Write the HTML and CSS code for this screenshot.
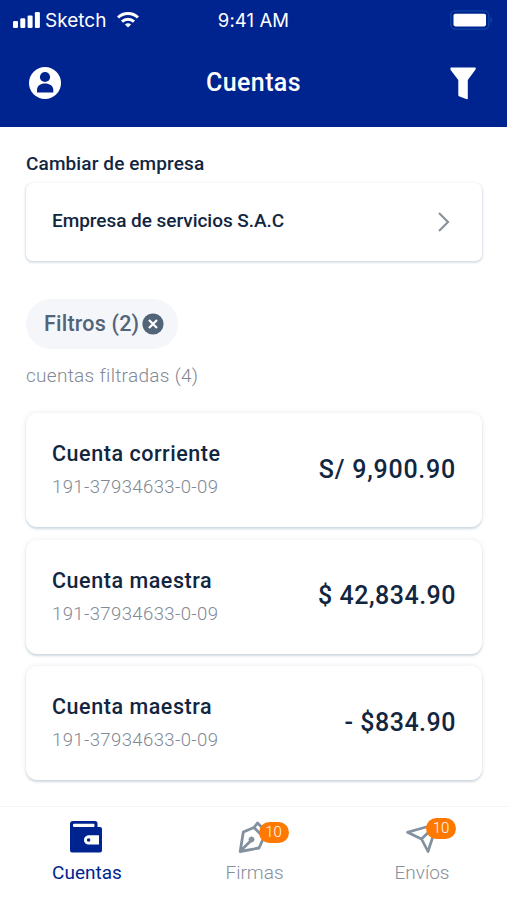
FILE: index.html
```html
<!DOCTYPE html>
<html lang="es">
<head>
<meta charset="utf-8">
<meta name="viewport" content="width=device-width, initial-scale=1">
<title>Cuentas</title>
<link rel="stylesheet" href="styles.css">
</head>
<body>
<div class="app">
  <header class="header">
    <div class="status">
      <div class="carrier">
        <svg width="27" height="16" viewBox="0 0 27 16" fill="#fff"><rect x="0" y="9" width="5" height="7" rx="1.2"/><rect x="7.3" y="6.3" width="5" height="9.7" rx="1.2"/><rect x="14.6" y="3.4" width="5" height="12.6" rx="1.2"/><rect x="21.9" y="0" width="5" height="16" rx="1.2"/></svg>
        <span class="carrier-name">Sketch</span>
        <svg class="wifi" width="22" height="16" viewBox="0 0 22 16" fill="none" stroke="#fff" stroke-width="3"><path d="M1 5.5C6.500.200 15.500.200 21 5.500"/><path d="M5 9.700C8.400 6.500 13.600 6.500 17 9.700"/><path d="M11 15.600L7.900 12.400C9.600 10.900 12.400 10.900 14.100 12.400Z" fill="#fff" stroke="none"/></svg>
      </div>
      <span class="clock">9:41 AM</span>
      <svg class="battery" width="43" height="20" viewBox="0 0 43 20"><rect x=".8" y=".8" width="38" height="18.400" rx="4.500" fill="none" stroke="#0d45a3" stroke-width="1.300"/><rect x="3.500" y="3.800" width="32.500" height="12.600" rx="1.800" fill="#fff"/><path d="M40.500 7v6c2.300-1 2.300-5 0-6z" fill="#0d45a3"/></svg>
    </div>
    <div class="titlebar">
      <svg width="32" height="32" viewBox="0 0 32 32"><circle cx="16" cy="16" r="16" fill="#fff"/><circle cx="16" cy="10" r="5.100" fill="#00248f"/><path d="M8 25.500V23C8 19 11.400 16.600 16 16.600S24.300 19 24.300 23v2.500z" fill="#00248f"/></svg>
      <h1 class="title">Cuentas</h1>
      <svg class="funnel" width="26" height="33" viewBox="0 0 26 33" fill="#fff"><path d="M1 .5h24q1 0 .8 1.200L25 3.200 17.800 13V31.500q0 1-1 .8L9 29.200q-.7-.4-.7-1.200V13L1 3.600Q-.3 1 1 .5z"/></svg>
    </div>
  </header>
  <main class="content">
    <p class="label">Cambiar de empresa</p>
    <div class="select">
      <span class="company">Empresa de servicios S.A.C</span>
      <svg width="12" height="20" viewBox="0 0 12 20" fill="none" stroke="#8b939e" stroke-width="2.200"><path d="M1 1l9 9-9 9"/></svg>
    </div>
    <div class="chip">
      <span class="chip-text">Filtros (2)</span>
      <svg width="22" height="22" viewBox="0 0 22 22"><circle cx="11" cy="11" r="10.600" fill="#526477"/><path d="M7 7l8 8M15 7l-8 8" stroke="#fff" stroke-width="2.200"/></svg>
    </div>
    <p class="count">cuentas filtradas (4)</p>
    <div class="accounts">
      <section class="card"><div><h2 class="name">Cuenta corriente</h2><p class="number">191-37934633-0-09</p></div><span class="amount soles">S/ 9,900.90</span></section>
      <section class="card"><div><h2 class="name">Cuenta maestra</h2><p class="number">191-37934633-0-09</p></div><span class="amount">$ 42,834.90</span></section>
      <section class="card"><div><h2 class="name">Cuenta maestra</h2><p class="number">191-37934633-0-09</p></div><span class="amount">- $834.90</span></section>
    </div>
  </main>
  <nav class="tabs">
    <div class="tab active">
      <div class="icon"><svg width="34" height="34" viewBox="0 0 34 34"><path fill="#00248f" d="M4 1h22q2.500 0 2.500 2.500V7H31q2 0 2 2v21.500q0 2-2 2H3q-2 0-2-2V4q0-3 3-3z"/><rect x="4" y="3.800" width="21.500" height="3.200" rx="1" fill="#fff"/><path d="M19 15.300h11v9.200H19q-4-1-4-4.600t4-4.600z" fill="#fff"/><circle cx="19.600" cy="20" r="1.800" fill="#00248f"/></svg></div>
      <span class="tab-label">Cuentas</span>
    </div>
    <div class="tab firmas">
      <div class="icon"><svg width="34" height="34" viewBox="0 0 34 34" fill="none" stroke="#8290a0" stroke-width="2.800" stroke-linejoin="round"><path d="M17 7.500L6.300 12 3.200 31.500 22 28 26.800 17.500z"/><path d="M17 7.500L20.500 3l10 10-3.700 4.500M4 30.500L14 20.500"/><circle cx="14.500" cy="19.500" r="2.500" fill="#8290a0" stroke-width="1"/></svg><span class="badge">10</span></div>
      <span class="tab-label">Firmas</span>
    </div>
    <div class="tab envios">
      <div class="icon"><svg width="34" height="34" viewBox="0 0 34 34" fill="none" stroke="#8290a0" stroke-width="2.700" stroke-linejoin="round"><path d="M2.500 12.300L32 4 23 31.500 16.500 19zM16.500 19L32 4"/></svg><span class="badge">10</span></div>
      <span class="tab-label">Envíos</span>
    </div>
  </nav>
</div>
</body>
</html>
```

FILE: styles.css
```css
* { box-sizing: border-box; }
body, h1, h2, p { margin: 0; }
body { font-family: Roboto, "Noto Sans", sans-serif; color: #12263f; background: #fff; }
svg { display: block; flex: none; }
.app { height: 900px; display: flex; flex-direction: column; overflow: hidden; white-space: nowrap; }
.header { height: 127px; background: #00248f; color: #fff; flex: none; }
.status { height: 40px; padding: 0 14px 0 13px; display: grid; grid-template-columns: 1fr auto 1fr; align-items: center; font: 400 19px/24px Inter, sans-serif; }
.carrier { display: flex; align-items: center; }
.carrier-name { margin: 1px 0 0 5px; letter-spacing: 0; }
.wifi { margin-left: 11px; margin-top: -1px; }
.clock { font-size: 18.500px; letter-spacing: .1px; padding-left: 1px; }
.battery { justify-self: end; }
.titlebar { height: 86px; display: grid; grid-template-columns: 1fr auto 1fr; align-items: center; padding: 0 31px 0 29px; }
.title { font-size: 25px; line-height: 32px; font-weight: 500; letter-spacing: .4px; padding-left: 2px; }
.funnel { justify-self: end; }
.content { flex: none; height: 679px; padding: 24px 25px 0 26px; }
.label { font-size: 19px; line-height: 26px; font-weight: 500; letter-spacing: .12px; }
.select { margin-top: 6px; height: 78px; border-radius: 7px; display: flex; align-items: center; justify-content: space-between; padding: 0 32px 0 26px; box-shadow: 0 1px 2px 1px rgba(42, 90, 120, .18); }
.company { font-size: 19px; line-height: 24px; font-weight: 500; margin-top: -3px; letter-spacing: -.04px; }
.chip { margin-top: 38px; width: 152px; height: 50px; border-radius: 25px; background: #f5f6fa; display: flex; align-items: center; padding-left: 18px; gap: 4px; color: #526477; }
.chip-text { width: 94px; font-size: 21.500px; line-height: 28px; font-weight: 500; letter-spacing: .2px; }
.count { margin-top: 15px; font-size: 19px; line-height: 24px; font-weight: 300; letter-spacing: .3px; color: #818995; }
.accounts { margin-top: 25px; display: flex; flex-direction: column; gap: 12.700px; }
.card { height: 114px; border-radius: 11px; background: #fff; display: flex; align-items: center; justify-content: space-between; padding: 0 26px; box-shadow: 0 2px 2px rgba(42, 90, 120, .18), 0 0 5px rgba(42, 90, 120, .12); }
.name { font-size: 21.500px; line-height: 30px; font-weight: 500; letter-spacing: .55px; }
.number { margin-top: 4px; font-size: 18.500px; line-height: 28px; font-weight: 300; letter-spacing: .4px; color: #818995; }
.amount { font-size: 25px; line-height: 30px; font-weight: 500; letter-spacing: .5px; margin-top: -1px; }
.amount.soles { letter-spacing: .75px; }
.tabs { flex: 1; display: flex; justify-content: space-between; border-top: 1px solid #f2f3f5; padding: 13px 33px 0 35px; }
.tab { width: 104px; display: flex; flex-direction: column; align-items: center; color: #858e9b; font-weight: 300; }
.tab.active { color: #00248f; font-weight: 400; }
.icon { position: relative; width: 38px; display: flex; justify-content: center; }
.active .icon { padding-right: 3px; }
.firmas .icon { margin-right: 2px; }
.tab-label { margin-top: 6px; font-size: 19px; line-height: 26px; }
.badge { position: absolute; left: 24px; top: 2px; width: 30px; height: 21px; border-radius: 11px; background: #ff7800; color: #fff; font-size: 15px; line-height: 21px; text-align: center; }
.envios .badge { left: 23px; top: -2px; }
```
